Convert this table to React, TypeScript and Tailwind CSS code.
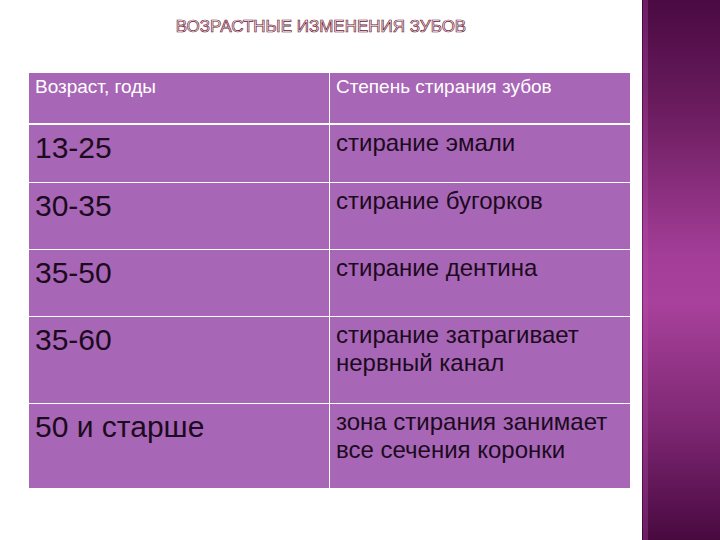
import React from "react";

const rows = [
  { age: "13-25", wear: ["стирание эмали"], h: "h-[57px]" },
  { age: "30-35", wear: ["стирание бугорков"], h: "h-[66px]" },
  { age: "35-50", wear: ["стирание дентина"], h: "h-[66px]" },
  { age: "35-60", wear: ["стирание затрагивает", "нервный канал"], h: "h-[86px]" },
  { age: "50 и старше", wear: ["зона стирания занимает", "все сечения коронки"], h: "h-[84px]" },
];

export default function App() {
  return (
    <div className="flex h-[540px] w-[720px] overflow-hidden bg-white font-['Liberation_Sans',Arial,sans-serif]">
      <div className="flex w-[642px] flex-col">
        <div className="pt-[16px] text-center">
          <h1 className="text-[17px] leading-[22px] text-white uppercase [-webkit-text-stroke:0.7px_#6b1230]">
            Возрастные изменения зубов
          </h1>
        </div>

        <div className="ml-[29px] mt-[35px] flex w-[601px] flex-col gap-px bg-white">
          <div className="mb-px grid h-[50px] grid-cols-[300px_300px] gap-x-px">
            <div className="bg-[#a866b6] px-[6px] pt-[3px] text-[19px] leading-[22px] text-white">
              Возраст, годы
            </div>
            <div className="bg-[#a866b6] px-[6px] pt-[3px] text-[19px] leading-[22px] text-white">
              Степень стирания зубов
            </div>
          </div>

          {rows.map((r) => (
            <div key={r.age} className={`grid grid-cols-[300px_300px] gap-x-px ${r.h}`}>
              <div className="bg-[#a866b6] px-[6px] pt-[5px] text-[30px] leading-[36px] text-[#1c0a20]">
                {r.age}
              </div>
              <div className="bg-[#a866b6] px-[6px] pt-[4px] text-[24px] leading-[28px] text-[#1c0a20]">
                {r.wear.map((line) => (
                  <div key={line}>{line}</div>
                ))}
              </div>
            </div>
          ))}
        </div>
      </div>

      <div className="relative w-[78px] bg-[linear-gradient(to_bottom,#4a0a42_0%,#6a1c5e_20%,#a33d97_47%,#a8419c_56%,#7b2570_80%,#48093f_100%)]">
        <div className="absolute inset-y-0 left-0 w-px bg-[#3f0a38]/50" />
        <div className="absolute inset-y-0 left-px w-[5px] bg-[#c050b0]/30" />
      </div>
    </div>
  );
}
